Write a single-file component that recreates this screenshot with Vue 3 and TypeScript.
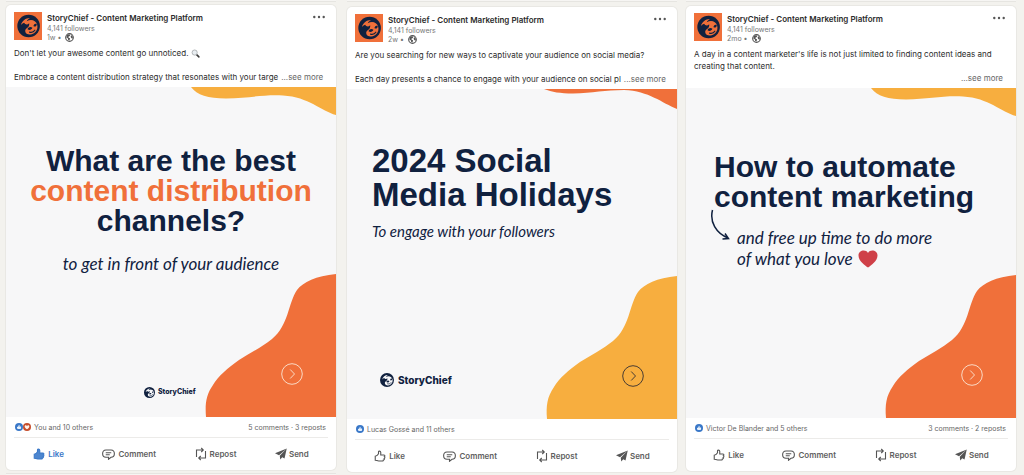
<script setup lang="ts">
interface Post {
  id: string
  age: string
  lines: string[]
  glass?: boolean
  theme: 'best' | 'holidays' | 'automate'
  title: { text: string; accent?: boolean }[]
  note: string[]
  brand: boolean
  liked: boolean
  reactions: string
  stats?: string
}

const posts: Post[] = [
  {
    id: 'distribution',
    age: '1w',
    lines: ["Don't let your awesome content go unnoticed.", '', 'Embrace a content distribution strategy that resonates with your targe'],
    glass: true,
    theme: 'best',
    title: [{ text: 'What are the best' }, { text: 'content distribution', accent: true }, { text: 'channels?' }],
    note: ['to get in front of your audience'],
    brand: true,
    liked: true,
    reactions: 'You and 10 others',
    stats: '5 comments · 3 reposts',
  },
  {
    id: 'holidays',
    age: '2w',
    lines: ['Are you searching for new ways to captivate your audience on social media?', '', 'Each day presents a chance to engage with your audience on social pl'],
    theme: 'holidays',
    title: [{ text: '2024 Social' }, { text: 'Media Holidays' }],
    note: ['To engage with your followers'],
    brand: true,
    liked: false,
    reactions: 'Lucas Gossé and 11 others',
  },
  {
    id: 'automate',
    age: '2mo',
    lines: ["A day in a content marketer's life is not just limited to finding content ideas and", 'creating that content.', ''],
    theme: 'automate',
    title: [{ text: 'How to automate' }, { text: 'content marketing' }],
    note: ['and free up time to do more', 'of what you love'],
    brand: false,
    liked: false,
    reactions: 'Victor De Blander and 5 others',
    stats: '3 comments · 2 reposts',
  },
]
</script>

<template>
  <svg class="defs" aria-hidden="true">
    <symbol id="sloth-face" viewBox="0 0 24 24">
      <path d="M3.600 11C4.800 6.200 9 3.200 13.500 3.300C11.800 4.200 10.600 5.400 10 6.800C14.500 4 19.800 5.600 21.300 10.300C22.900 15.800 19 21 13.600 21.300C10.800 21.400 8.600 20 8.300 17.700C8.100 16 9.200 14.900 10.600 13.900C12.300 12.600 13 11 12.600 8.900C10.800 10.900 8.400 10.600 7.200 8.500C6.300 8.900 4.600 9.800 3.600 11Z" />
    </symbol>
    <symbol id="sloth-marks" viewBox="0 0 24 24">
      <path d="M10.800 15.500C11.700 13 14.300 12.200 16.200 14C15.200 16.300 12.900 17 10.800 15.500ZM17.400 12.400C17.300 10.300 18.800 9.200 20.800 9.800C21.200 11.800 19.500 13.300 17.400 12.400Z" />
      <path d="M13 18.600C15.300 19.200 17.600 18.400 18.800 16.600" fill="none" stroke="currentColor" stroke-width="1.300" stroke-linecap="round" />
    </symbol>
  </svg>

  <main class="feed">
    <div v-for="post in posts" :key="post.id" class="column" :class="post.theme">
      <div class="edge above"></div>
      <article class="post">
        <header class="head">
          <div class="identity">
            <svg class="avatar" viewBox="0 0 28 28" role="img" aria-label="StoryChief logo">
              <rect width="28" height="28" fill="#f0703a" />
              <circle cx="14.6" cy="14" r="11.3" fill="#10213f" />
              <use href="#sloth-face" x="3.6" y="3" width="22" height="22" fill="#f0703a" />
              <use href="#sloth-marks" x="3.6" y="3" width="22" height="22" class="navy" />
            </svg>
            <div class="who">
              <a class="name" href="#">StoryChief - Content Marketing Platform</a>
              <span class="meta">4,141 followers</span>
              <span class="meta when">
                {{ post.age }} •
                <svg class="globe" viewBox="0 0 16 16" aria-label="Public">
                  <circle cx="8" cy="8" r="6.8" fill="#fff" stroke="#555" stroke-width="2" />
                  <path d="M3 4L7 2L9.500 3L8.500 5.500L6 6.500L6.500 8.500L9 9.500L8 13.500L5.500 12L5 9.500L2.500 8ZM11 3.500L14 6.500L13.500 10L11 9L10 6.500Z" fill="#555" />
                </svg>
              </span>
            </div>
            <button class="more" type="button" aria-label="More options">
              <svg viewBox="0 0 14 4"><circle cx="2.300" cy="2" r="1.200" /><circle cx="7" cy="2" r="1.200" /><circle cx="11.700" cy="2" r="1.200" /></svg>
            </button>
          </div>
          <div class="copy">
            <p v-for="(line, i) in post.lines" :key="i" class="line">
              <span class="words">{{ line }}<svg v-if="post.glass && i === 0" class="glass" viewBox="0 0 16 16" aria-hidden="true">
                <path d="M9.500 9.500L14 14" stroke="#3b3b3b" stroke-width="2.800" stroke-linecap="round" />
                <circle cx="6.500" cy="6.300" r="4.600" fill="#e9eef2" stroke="#a3a7aa" stroke-width="1.400" />
              </svg></span>
              <button v-if="i === 2" class="see" type="button">...see more</button>
            </p>
          </div>
        </header>

        <section class="art">
          <svg class="shapes" viewBox="0 0 330 330" preserveAspectRatio="none" aria-hidden="true">
            <path v-if="post.theme === 'holidays'" class="top" d="M197 0C205 3 213 4.500 226 4.500C246 4 258 1 277 1C302 2 315 14 330 20V0Z" />
            <path v-else class="top" d="M185 0C191 8 202 11.500 220 11.500C243 11 257 7.500 277 8.500C303 10 315 24 330 28V0Z" />
            <path class="bottom" d="M330 187C310 189 297 195 291 203C282 216 283 238 266 252C256 260 244 266 233 273C222 281 212 289 207 298C200 308 199 317 200 330H330Z" />
          </svg>
          <h2 class="title">
            <span v-for="part in post.title" :key="part.text" :class="{ accent: part.accent }">{{ part.text }}</span>
          </h2>
          <div class="note">
            <svg v-if="post.theme === 'automate'" class="swoop" viewBox="0 0 20 32" aria-hidden="true">
              <path d="M2.500 1C-.5 13 6 24 18 29M12.500 30L18.500 29.500L15 24.500" />
            </svg>
            <p>
              <span v-for="(line, i) in post.note" :key="line">{{ line }}<svg v-if="post.theme === 'automate' && i === 1" class="heart" viewBox="0 0 20 18" aria-hidden="true">
                <path d="M10 17.500C7 15.500 .5 11 .5 5.500C.5 .3 7.600-1.200 10 3C12.400-1.200 19.500 .3 19.500 5.500C19.500 11 13 15.500 10 17.500Z" fill="#cf4048" />
              </svg></span>
            </p>
          </div>
          <div v-if="post.brand" class="brand">
            <svg viewBox="0 0 24 24" aria-hidden="true">
              <circle cx="12" cy="12" r="12" fill="#10213f" />
              <use href="#sloth-face" width="24" height="24" fill="#f7f7f9" />
              <use href="#sloth-marks" width="24" height="24" class="navy" />
            </svg>
            <span>StoryChief</span>
          </div>
          <button class="next" type="button" aria-label="Next page">
            <svg viewBox="0 0 22 22"><circle cx="11" cy="11" r="10.300" /><path d="M9.200 6.500L13.500 11L9.200 15.500" /></svg>
          </button>
        </section>

        <footer class="foot">
          <div class="social">
            <span class="badges">
              <svg viewBox="0 0 16 16" aria-label="Like"><circle cx="8" cy="8" r="8" fill="#3a78c8" /><path d="M4 8L6.500 7.200L7.800 3.500L9.200 4L8.800 7H12L12.300 8.500L11.500 12H6.500L4 11Z" fill="#e8f2fc" /></svg>
              <svg v-if="post.liked" viewBox="0 0 16 16" aria-label="Love"><circle cx="8" cy="8" r="8" fill="#c64d2c" /><path d="M8 12.500C5.500 10.800 3.300 9 3.300 6.800C3.300 4.200 6.800 3.800 8 6C9.200 3.800 12.700 4.200 12.700 6.800C12.700 9 10.500 10.800 8 12.500Z" fill="#fff1ea" /></svg>
            </span>
            <a href="#">{{ post.reactions }}</a>
            <a v-if="post.stats" class="stats" href="#">{{ post.stats }}</a>
          </div>
          <div class="actions">
            <button type="button" :class="{ liked: post.liked }">
              <svg class="thumb" viewBox="0 0 24 24"><path d="M2.500 12.500C5 12 8 9.500 9 7.500V4C9 1.500 13 1.500 13.500 4.500L13.500 10H19.500C22 10 22.500 12.500 20.800 13.500C22.300 14.500 22 16.500 20.300 17C21.300 18.500 20.500 20 18.800 20C19 21.500 18 22 16.500 22H9.500C6 22 5.500 20.500 2.500 20.500Z" /></svg>
              Like
            </button>
            <button type="button">
              <svg class="wide" viewBox="0 0 26 22"><path d="M8 2H18C27 2.500 27 16 18 16.500L13 20.500V16.500H8C-1 16-1 2.500 8 2ZM7.500 7.500H18.500M7.500 11.500H15.500" /></svg>
              Comment
            </button>
            <button type="button">
              <svg class="tall" viewBox="0 0 24 28"><path d="M3 20V6H16M12.500 2L16.500 6L12.500 10M21 8V22H8M11.500 18L7.500 22L11.500 26" /></svg>
              Repost
            </button>
            <button type="button" class="send">
              <svg viewBox="0 0 24 24"><path d="M23.500 1L0 10.500L8 14.500ZM23.500 1L9.500 15.500L10.500 23L14.500 18.500L19 21Z" /></svg>
              Send
            </button>
          </div>
        </footer>
      </article>
      <div class="edge below"></div>
    </div>
  </main>
</template>

<style>
body {
  margin: 0;
  background: #f3f2ee;
}
</style>

<style scoped>
.defs {
  position: absolute;
  width: 0;
  height: 0;
}
.navy {
  color: #10213f;
  fill: #10213f;
}
.feed {
  display: flex;
  padding: 0 8px 0 6px;
  font-family: Inter, "Liberation Sans", sans-serif;
  color: #2b2b2b;
}
.column {
  flex: 1;
  min-width: 0;
  display: flex;
  flex-direction: column;
}
.column.holidays {
  margin: 0 9px 0 11px;
}
.edge {
  height: 1px;
  background: #f6f5f3;
}
.edge.above {
  border-bottom: 1px solid #e6e5e1;
  margin-bottom: 3px;
}
.holidays .edge.above {
  margin-bottom: 5px;
}
.automate .edge.above {
  margin-bottom: 4px;
}
.edge.below {
  margin-top: 3px;
  border-top: 1px solid #e6e5e1;
  display: none;
}
.best .edge.below {
  display: block;
}
.post {
  background: #fff;
  border-radius: 5px;
  box-shadow: 0 0 0 1px #e9e8e4;
}
button {
  border: 0;
  padding: 0;
  background: none;
  font: inherit;
  color: inherit;
  cursor: pointer;
}
a {
  color: inherit;
  text-decoration: none;
}
svg {
  display: block;
}
.head {
  padding: 7px 8px 4px;
}
.identity {
  display: flex;
  gap: 5px;
  height: 28px;
}
.avatar {
  width: 28px;
  height: 28px;
}
.who {
  flex: 1;
  display: flex;
  flex-direction: column;
}
.name {
  font-size: 8px;
  font-weight: 600;
  line-height: 13px;
}
.meta {
  font-size: 7px;
  line-height: 8px;
  color: #777;
}
.when {
  display: flex;
  align-items: center;
  gap: 4px;
}
.globe {
  width: 9px;
  height: 9px;
}
.more {
  align-self: flex-start;
  padding: 3px 2px;
}
.more svg {
  width: 14px;
  height: 4px;
  fill: #555;
}
.copy {
  padding: 7px 5px 0 0;
}
.line {
  display: flex;
  gap: 3px;
  height: 12px;
  margin: 0;
  font-size: 8px;
  line-height: 12px;
}
.words {
  flex: 1 0 auto;
  white-space: nowrap;
}
.glass {
  display: inline-block;
  width: 9px;
  height: 9px;
  margin-left: 3px;
  vertical-align: -2px;
}
.see {
  white-space: nowrap;
  color: #666;
}
.art {
  position: relative;
  display: flex;
  flex-direction: column;
  aspect-ratio: 1;
  box-sizing: border-box;
  background: #f7f7f8;
  color: #10213f;
}
.shapes {
  position: absolute;
  inset: 0;
  width: 100%;
  height: 100%;
}
.top {
  fill: #f7ae3f;
}
.bottom {
  fill: #f0703a;
}
.holidays .top {
  fill: #f0703a;
}
.holidays .bottom {
  fill: #f7ae3f;
}
.title,
.note,
.brand {
  position: relative;
}
.title {
  margin: 0;
  font-family: "Liberation Sans", Arial, sans-serif;
  font-size: 30px;
  line-height: 30px;
  font-weight: 700;
  white-space: nowrap;
}
.title span,
.note span {
  display: block;
}
.accent {
  color: #f0703a;
}
.note {
  font-family: Lato, "Liberation Sans", sans-serif;
  font-style: italic;
  font-size: 17px;
  line-height: 21px;
  white-space: nowrap;
}
.note p {
  margin: 0;
}
.best .art {
  padding-top: 59px;
  text-align: center;
}
.best .note {
  margin-top: 17px;
}
.holidays .art {
  padding: 55px 0 0 25px;
}
.holidays .title {
  font-size: 33px;
  line-height: 34px;
}
.holidays .note {
  margin-top: 9px;
  font-size: 15px;
}
.automate .art {
  padding: 64px 0 0 24px;
}
.automate .title {
  padding-left: 4px;
}
.automate .note {
  display: flex;
  gap: 7px;
  margin-top: -3px;
}
.automate .note p {
  padding-top: 18px;
}
.swoop {
  width: 20px;
  height: 32px;
  fill: none;
  stroke: #10213f;
  stroke-width: 1.5;
}
.heart {
  display: inline-block;
  width: 20px;
  height: 18px;
  margin-left: 5px;
  vertical-align: -3px;
}
.brand {
  display: flex;
  align-items: center;
  gap: 3px;
  margin-top: auto;
  font-weight: 800;
}
.best .brand {
  margin-left: 138px;
  margin-bottom: 19px;
  font-size: 7px;
  line-height: 12px;
}
.best .brand svg {
  width: 11px;
  height: 11px;
}
.holidays .brand {
  margin-left: 8px;
  margin-bottom: 32px;
  gap: 4px;
  font-size: 10px;
  line-height: 14px;
}
.holidays .brand svg {
  width: 14px;
  height: 14px;
}
.next {
  position: absolute;
  right: 33px;
  bottom: 32px;
}
.next svg {
  width: 22px;
  height: 22px;
  fill: none;
  stroke: #fad9c4;
}
.holidays .next svg {
  stroke: #4a3d33;
}
.foot {
  padding: 0 8px;
}
.social {
  display: flex;
  align-items: center;
  gap: 3px;
  height: 20px;
  padding: 0 2px 0 1px;
  border-bottom: 1px solid #ecebe9;
  font-size: 7px;
  color: #666;
}
.badges {
  display: flex;
}
.badges svg {
  width: 8px;
  height: 8px;
}
.stats {
  margin-left: auto;
}
.actions {
  display: flex;
  justify-content: space-around;
  height: 32px;
}
.actions button {
  display: flex;
  align-items: center;
  gap: 3px;
  font-size: 8px;
  font-weight: 600;
  color: #5f5f5f;
}
.actions svg {
  width: 12px;
  height: 12px;
  fill: none;
  stroke: #555;
  stroke-width: 2.2;
}
.actions .wide {
  width: 13px;
  height: 11px;
}
.actions .tall {
  height: 14px;
}
.actions .send {
  gap: 2px;
}
.actions .send svg {
  fill: #555;
  stroke: none;
}
.actions .liked {
  color: #3a78c8;
}
.actions .liked svg {
  fill: #4d86cf;
  stroke: #3a78c8;
}
</style>
